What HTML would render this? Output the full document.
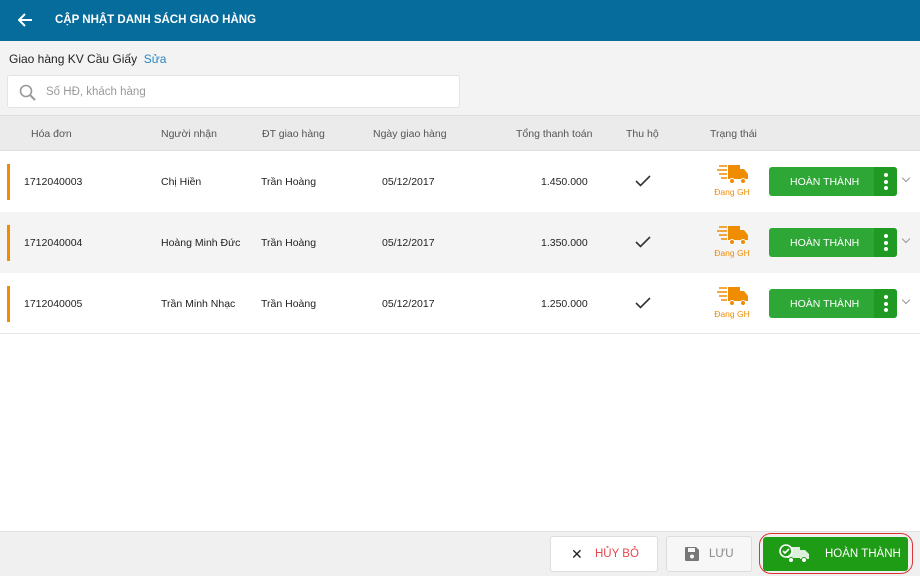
<!DOCTYPE html>
<html><head><meta charset="utf-8"><style>
*{margin:0;padding:0;box-sizing:border-box}
body{width:920px;height:576px;overflow:hidden;font-family:"Liberation Sans",sans-serif;background:#fff;position:relative;font-size:11px;color:#333}
.hdr{position:absolute;left:0;top:0;width:920px;height:41px;background:#066c9b;color:#fff}
.hdr .t{position:absolute;left:55px;top:14px;font-weight:bold;font-size:11.5px}
.top{position:absolute;left:0;top:41px;width:920px;height:74px;background:#f3f3f3}
.lbl{position:absolute;left:9px;top:52px;font-size:12px;color:#222}
.lbl span{color:#2a86c0}
.search{position:absolute;left:7px;top:75px;width:453px;height:33px;background:#fff;border:1px solid #e3e3e3;border-radius:3px}
.search .p{position:absolute;left:38px;top:10px;color:#999;font-size:11.5px}
.th{position:absolute;left:0;top:115px;width:920px;height:36px;background:#ebebeb;border-top:1px solid #ddd;border-bottom:1px solid #ddd}
.th div{position:absolute;top:12px;color:#555;font-size:10.5px}
.row{position:absolute;left:0;width:920px;height:61px}
.row div.c{position:absolute;top:25px;font-size:10.5px;color:#222}
.bar{position:absolute;left:7px;top:13px;width:3px;height:36px;background:#f08c00}
.btn{position:absolute;left:769px;top:16px;width:128px;height:29px;background:#2ea737;border-radius:3px;color:#fff;font-size:10.5px}
.btn span{position:absolute;left:21px;top:9px}
.btn i{position:absolute;right:0;top:0;width:23px;height:29px;background:#209a22;border-radius:0 3px 3px 0}
.btn i b{position:absolute;left:10px;width:4px;height:4px;border-radius:50%;background:#fff}
.chev{position:absolute;left:903px;top:24px;width:6px;height:6px;border-right:1px solid #999;border-bottom:1px solid #999;transform:rotate(45deg)}
.st{position:absolute;left:712px;top:12px;width:40px;text-align:center;color:#f08c00;font-size:8.5px}
.ft{position:absolute;left:0;top:531px;width:920px;height:45px;background:#f0f0f0;border-top:1px solid #e0e0e0}
.b{position:absolute;top:536px;height:36px;border:1px solid #ddd;border-radius:3px;background:#fff;font-size:11.5px}
</style></head><body>
<div class="hdr">
<svg style="position:absolute;left:18px;top:13px" width="15" height="14" viewBox="0 0 15 14"><path d="M14 7H2M7 1L1 7l6 6" stroke="#fff" stroke-width="2" fill="none"/></svg>
<div class="t">CẬP NHẬT DANH SÁCH GIAO HÀNG</div></div>
<div class="top"></div>
<div class="lbl">Giao hàng KV Cầu Giấy &nbsp;<span>Sửa</span></div>
<div class="search"><svg style="position:absolute;left:11px;top:8px" width="17" height="17" viewBox="0 0 17 17"><circle cx="7" cy="7" r="5.5" stroke="#999" stroke-width="1.6" fill="none"/><path d="M11 11l5 5" stroke="#999" stroke-width="2"/></svg><div class="p">Số HĐ, khách hàng</div></div>
<div class="th"><div style="left:31px">Hóa đơn</div><div style="left:161px">Người nhận</div><div style="left:262px">ĐT giao hàng</div><div style="left:373px">Ngày giao hàng</div><div style="left:516px">Tổng thanh toán</div><div style="left:626px">Thu hộ</div><div style="left:710px">Trạng thái</div></div>

<!-- rows -->
<div class="row" style="top:151px;background:#fff"><div class="bar"></div><div class="c" style="left:24px">1712040003</div><div class="c" style="left:161px">Chị Hiền</div><div class="c" style="left:261px">Trần Hoàng</div><div class="c" style="left:382px">05/12/2017</div><div class="c" style="left:541px">1.450.000</div>
<svg style="position:absolute;left:635px;top:24px" width="16" height="12"><path d="M1 6l4.5 4.5L15 1" stroke="#333" stroke-width="1.6" fill="none"/></svg>
<div class="st"><svg width="34" height="22" viewBox="0 0 34 22"><path d="M4 3h8M2 7h10M4 11h8M6 15h6" stroke="#f08c00" stroke-width="1.6"/><rect x="13" y="2" width="12" height="14" fill="#f08c00"/><path d="M25 6h4l4 5v5h-8z" fill="#f08c00"/><circle cx="17" cy="18" r="2.5" fill="#f08c00" stroke="#fff"/><circle cx="28" cy="18" r="2.5" fill="#f08c00" stroke="#fff"/></svg><div>Đang GH</div></div>
<div class="btn"><span>HOÀN THÀNH</span><i><b style="top:6px"></b><b style="top:12.5px"></b><b style="top:19px"></b></i></div><div class="chev"></div></div>

<div class="row" style="top:212px;background:#f4f4f4"><div class="bar"></div><div class="c" style="left:24px">1712040004</div><div class="c" style="left:161px">Hoàng Minh Đức</div><div class="c" style="left:261px">Trần Hoàng</div><div class="c" style="left:382px">05/12/2017</div><div class="c" style="left:541px">1.350.000</div>
<svg style="position:absolute;left:635px;top:24px" width="16" height="12"><path d="M1 6l4.5 4.5L15 1" stroke="#333" stroke-width="1.6" fill="none"/></svg>
<div class="st"><svg width="34" height="22" viewBox="0 0 34 22"><path d="M4 3h8M2 7h10M4 11h8M6 15h6" stroke="#f08c00" stroke-width="1.6"/><rect x="13" y="2" width="12" height="14" fill="#f08c00"/><path d="M25 6h4l4 5v5h-8z" fill="#f08c00"/><circle cx="17" cy="18" r="2.5" fill="#f08c00" stroke="#fff"/><circle cx="28" cy="18" r="2.5" fill="#f08c00" stroke="#fff"/></svg><div>Đang GH</div></div>
<div class="btn"><span>HOÀN THÀNH</span><i><b style="top:6px"></b><b style="top:12.5px"></b><b style="top:19px"></b></i></div><div class="chev"></div></div>

<div class="row" style="top:273px;background:#fff;border-bottom:1px solid #e5e5e5"><div class="bar"></div><div class="c" style="left:24px">1712040005</div><div class="c" style="left:161px">Trần Minh Nhạc</div><div class="c" style="left:261px">Trần Hoàng</div><div class="c" style="left:382px">05/12/2017</div><div class="c" style="left:541px">1.250.000</div>
<svg style="position:absolute;left:635px;top:24px" width="16" height="12"><path d="M1 6l4.5 4.5L15 1" stroke="#333" stroke-width="1.6" fill="none"/></svg>
<div class="st"><svg width="34" height="22" viewBox="0 0 34 22"><path d="M4 3h8M2 7h10M4 11h8M6 15h6" stroke="#f08c00" stroke-width="1.6"/><rect x="13" y="2" width="12" height="14" fill="#f08c00"/><path d="M25 6h4l4 5v5h-8z" fill="#f08c00"/><circle cx="17" cy="18" r="2.5" fill="#f08c00" stroke="#fff"/><circle cx="28" cy="18" r="2.5" fill="#f08c00" stroke="#fff"/></svg><div>Đang GH</div></div>
<div class="btn"><span>HOÀN THÀNH</span><i><b style="top:6px"></b><b style="top:12.5px"></b><b style="top:19px"></b></i></div><div class="chev"></div></div>

<div class="ft"></div>
<div class="b" style="left:550px;width:108px"><span style="position:absolute;left:20px;top:9px;font-size:14px;color:#222">✕</span><span style="position:absolute;left:44px;top:11px;color:#e8474c">HỦY BỎ</span></div>
<div class="b" style="left:666px;width:86px;background:#f7f7f7"><svg style="position:absolute;left:18px;top:10px" width="14" height="14" viewBox="0 0 14 14"><path d="M0 1a1 1 0 011-1h10l3 3v10a1 1 0 01-1 1H1a1 1 0 01-1-1z" fill="#777"/><rect x="3" y="1" width="7" height="4" fill="#f7f7f7"/><circle cx="7" cy="9.5" r="2" fill="#f7f7f7"/></svg><span style="position:absolute;left:42px;top:11px;color:#888">LƯU</span></div>
<div style="position:absolute;left:759px;top:533px;width:154px;height:41px;border:1px solid #d33;border-radius:12px"></div>
<div class="b" style="left:763px;width:145px;top:537px;height:34px;background:#1e9c16;border:none"><svg style="position:absolute;left:16px;top:7px" width="32" height="20" viewBox="0 0 32 20"><rect x="8" y="3" width="13" height="11" fill="#fff" opacity=".85"/><path d="M21 6h5l4 4v5h-9z" fill="#fff" opacity=".85"/><circle cx="7" cy="7" r="6" fill="#1e9c16" stroke="#fff" stroke-width="1.6"/><path d="M4 7l2 2 4-4" stroke="#fff" stroke-width="1.6" fill="none"/><circle cx="12" cy="16" r="2.5" fill="#fff" stroke="#1e9c16"/><circle cx="25" cy="16" r="2.5" fill="#fff" stroke="#1e9c16"/></svg><span style="position:absolute;left:62px;top:11px;color:#fff">HOÀN THÀNH</span></div>
</body></html>
